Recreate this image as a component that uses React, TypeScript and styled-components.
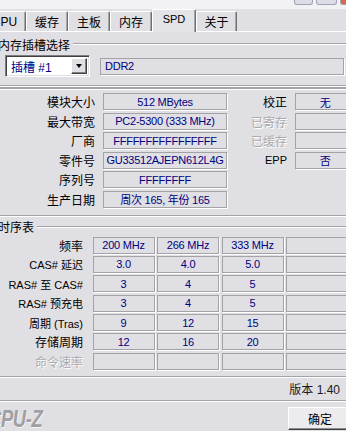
import styled, { createGlobalStyle } from "styled-components";

const GlobalStyle = createGlobalStyle`
  html, body {
    margin: 0;
    padding: 0;
    background: #e0dfe3;
    overflow: hidden;
  }
`;

const FONT = `"Liberation Sans", "Noto Sans CJK SC", sans-serif`;

const Root = styled.div`
  width: 346px;
  height: 431px;
  overflow: hidden;
  background: #e0dfe3;
  font-family: ${FONT};
  font-size: 11px;
  color: #000;
  display: flex;
  flex-direction: column;
`;

const TitleStrip = styled.div`
  height: 9px;
  flex: none;
  background: #f2f2f4;
  display: flex;
  justify-content: flex-end;
  align-items: flex-start;
  gap: 3px;
`;

const WinButton = styled.div<{ $red?: boolean; $w: number }>`
  width: ${({ $w }) => $w}px;
  height: 4px;
  border: 1px solid #9ea3b5;
  border-top: none;
  border-radius: 0 0 3px 3px;
  background: ${({ $red }) => ($red ? "#d9674d" : "#dcdde6")};
  margin-right: ${({ $red }) => ($red ? "-6px" : "0")};
`;

const TabStrip = styled.div`
  height: 22px;
  flex: none;
  display: flex;
  align-items: flex-end;
  position: relative;
  z-index: 1;
`;

const Tab = styled.div<{ $w: number; $active?: boolean; $ml?: number }>`
  box-sizing: border-box;
  width: ${({ $w }) => $w}px;
  height: ${({ $active }) => ($active ? 23 : 20)}px;
  margin-left: ${({ $ml }) => $ml ?? 0}px;
  margin-bottom: ${({ $active }) => ($active ? -1 : 0)}px;
  border-top: 1px solid #fff;
  border-left: 1px solid #fff;
  border-right: 1px solid #6e6e6e;
  box-shadow: inset -1px 0 0 #a6a5aa;
  border-radius: 2px 2px 0 0;
  background: ${({ $active }) => ($active ? "#e4e3e7" : "#e0dfe3")};
  display: flex;
  align-items: center;
  justify-content: center;
  padding-bottom: ${({ $active }) => ($active ? 4 : 0)}px;
  font-size: ${({ $active }) => ($active ? 11 : 12)}px;
`;

const Body = styled.div`
  flex: 1;
  border-top: 1px solid #fff;
  display: flex;
  flex-direction: column;
`;

const GroupHeader = styled.div<{ $mt: number }>`
  height: 14px;
  margin-top: ${({ $mt }) => $mt}px;
  display: flex;
  align-items: center;
  margin-left: -2px;
  font-size: 12px;

  &::after {
    content: "";
    flex: 1;
    margin-left: 3px;
    height: 0;
    border-top: 1px solid #a3a2a6;
    border-bottom: 1px solid #fff;
  }
`;

const Etched = styled.div<{ $mt: number; $double?: boolean }>`
  flex: none;
  margin-top: ${({ $mt }) => $mt}px;
  height: 0;
  border-top: 1px solid #a3a2a6;
  border-bottom: 1px solid #fff;
  box-shadow: ${({ $double }) =>
    $double ? "0 2px 0 #a3a2a6, 0 3px 0 #fff" : "none"};
  margin-bottom: ${({ $double }) => ($double ? 2 : 0)}px;
`;

const SlotRow = styled.div`
  margin-top: 4px;
  height: 22px;
  display: flex;
  align-items: center;
  padding-left: 5px;
  gap: 10px;
`;

const Select = styled.div`
  box-sizing: border-box;
  width: 85px;
  height: 22px;
  border-top: 1px solid #7f7f83;
  border-left: 1px solid #7f7f83;
  border-right: 1px solid #fff;
  border-bottom: 1px solid #fff;
  box-shadow: inset 1px 1px 0 #404040, inset -1px -1px 0 #e0dfe3;
  background: #fff;
  display: flex;
  align-items: center;
  padding: 2px;
`;

const SelectText = styled.span`
  flex: 1;
  color: #00007f;
  font-size: 12px;
  padding-left: 3px;
`;

const SelectButton = styled.div`
  box-sizing: border-box;
  width: 16px;
  height: 16px;
  background: #e0dfe3;
  border-top: 1px solid #fff;
  border-left: 1px solid #fff;
  border-right: 1px solid #404040;
  border-bottom: 1px solid #404040;
  box-shadow: inset -1px -1px 0 #808080;
  display: flex;
  align-items: center;
  justify-content: center;

  &::before {
    content: "";
    border-left: 3.5px solid transparent;
    border-right: 3.5px solid transparent;
    border-top: 4px solid #000;
  }
`;

const Field = styled.div<{ $align?: "left" | "center" }>`
  box-sizing: border-box;
  height: 17px;
  border: 1px solid #a3a2a6;
  box-shadow: 1px 1px 0 #fff;
  color: #00007f;
  display: flex;
  align-items: center;
  justify-content: ${({ $align }) =>
    $align === "left" ? "flex-start" : "center"};
  padding-left: ${({ $align }) => ($align === "left" ? 4 : 0)}px;
  white-space: nowrap;
  overflow: hidden;
  font-size: 11px;
  letter-spacing: -0.25px;
`;

const WideField = styled(Field)`
  width: 244px;
`;

const InfoGrid = styled.div`
  margin-top: 4px;
  display: grid;
  grid-template-columns: 95px 124px 52px 60px;
  column-gap: 8px;
  grid-auto-rows: 17px;
  row-gap: 2.5px;
`;

const Label = styled.div<{ $disabled?: boolean; $cjk?: boolean }>`
  display: flex;
  align-items: center;
  justify-content: flex-end;
  white-space: nowrap;
  font-size: ${({ $cjk }) => ($cjk ? 12 : 11)}px;
  color: ${({ $disabled }) => ($disabled ? "#aca9ad" : "#000")};
  text-shadow: ${({ $disabled }) => ($disabled ? "1px 1px 0 #fff" : "none")};
`;

const Empty = styled.div``;

const TimingGrid = styled.div`
  margin-top: 3px;
  display: grid;
  grid-template-columns: 90px repeat(4, 62px);
  column-gap: 2.5px;
  grid-auto-rows: 17px;
  row-gap: 2.4px;
`;

const TimingLabel = styled(Label)`
  padding-right: 7px;
`;

const VersionRow = styled.div`
  height: 22px;
  display: flex;
  align-items: center;
  justify-content: flex-end;
  padding-right: 6px;
  font-size: 12px;
  color: #1a1a1a;
`;

const BottomRow = styled.div`
  margin-top: 5px;
  display: flex;
  align-items: flex-start;
  justify-content: space-between;
`;

const Logo = styled.div`
  margin-left: -12px;
  margin-top: 1px;
  font-family: "Liberation Sans", sans-serif;
  font-weight: bold;
  font-style: italic;
  font-size: 23px;
  line-height: 22px;
  color: #a09fa4;
  text-shadow: 1px 1px 0 #f4f4f6;
  transform: scaleX(0.8);
  transform-origin: left center;
  letter-spacing: -0.5px;
`;

const OkButton = styled.div`
  box-sizing: border-box;
  width: 64px;
  height: 23px;
  margin-right: -6px;
  background: #ecebee;
  border-top: 1px solid #fff;
  border-left: 1px solid #fff;
  border-right: 1px solid #404040;
  border-bottom: 1px solid #404040;
  box-shadow: inset -1px -1px 0 #8c8b90;
  display: flex;
  align-items: center;
  justify-content: center;
  font-size: 12px;
`;

const info = [
  { label: "模块大小", value: "512 MBytes", rl: "校正", rv: "无" },
  { label: "最大带宽", value: "PC2-5300 (333 MHz)", rl: "已寄存", rv: "", rd: true },
  { label: "厂商", value: "FFFFFFFFFFFFFFFF", rl: "已缓存", rv: "", rd: true },
  { label: "零件号", value: "GU33512AJEPN612L4G", rl: "EPP", rv: "否" },
  { label: "序列号", value: "FFFFFFFF" },
  { label: "生产日期", value: "周次 165, 年份 165" },
];

const timings = [
  { label: "频率", cjk: true, v: ["200 MHz", "266 MHz", "333 MHz", ""] },
  { label: "CAS# 延迟", v: ["3.0", "4.0", "5.0", ""] },
  { label: "RAS# 至 CAS#", v: ["3", "4", "5", ""] },
  { label: "RAS# 预充电", v: ["3", "4", "5", ""] },
  { label: "周期 (Tras)", v: ["9", "12", "15", ""] },
  { label: "存储周期", cjk: true, v: ["12", "16", "20", ""] },
  { label: "命令速率", cjk: true, disabled: true, v: ["", "", "", ""] },
];

const tabs = [
  { t: "CPU", w: 43, ml: -17 },
  { t: "缓存", w: 42 },
  { t: "主板", w: 42 },
  { t: "内存", w: 42 },
  { t: "SPD", w: 44, active: true },
  { t: "关于", w: 41 },
];

export default function App() {
  return (
    <Root>
      <GlobalStyle />
      <TitleStrip>
        <WinButton $w={17} />
        <WinButton $w={19} />
        <WinButton $w={10} $red />
      </TitleStrip>
      <TabStrip>
        {tabs.map((tab) => (
          <Tab key={tab.t} $w={tab.w} $ml={tab.ml} $active={tab.active}>
            {tab.t}
          </Tab>
        ))}
      </TabStrip>
      <Body>
        <GroupHeader $mt={5}>内存插槽选择</GroupHeader>
        <SlotRow>
          <Select>
            <SelectText>插槽 #1</SelectText>
            <SelectButton />
          </Select>
          <WideField $align="left">DDR2</WideField>
        </SlotRow>
        <Etched $mt={8} $double />
        <InfoGrid>
          {info.map((row) => (
            <>
              <Label $cjk>{row.label}</Label>
              <Field>{row.value}</Field>
              {row.rl ? (
                <>
                  <Label $disabled={row.rd} $cjk={row.rl !== "EPP"}>
                    {row.rl}
                  </Label>
                  <Field>{row.rv}</Field>
                </>
              ) : (
                <>
                  <Empty />
                  <Empty />
                </>
              )}
            </>
          ))}
        </InfoGrid>
        <Etched $mt={7} />
        <GroupHeader $mt={3}>时序表</GroupHeader>
        <TimingGrid>
          {timings.map((row) => (
            <>
              <TimingLabel $cjk={row.cjk} $disabled={row.disabled}>
                {row.label}
              </TimingLabel>
              {row.v.map((v, i) => (
                <Field key={i}>{v}</Field>
              ))}
            </>
          ))}
        </TimingGrid>
        <Etched $mt={6} />
        <VersionRow>版本 1.40</VersionRow>
        <Etched $mt={0} />
        <BottomRow>
          <Logo>CPU-Z</Logo>
          <OkButton>确定</OkButton>
        </BottomRow>
      </Body>
    </Root>
  );
}
